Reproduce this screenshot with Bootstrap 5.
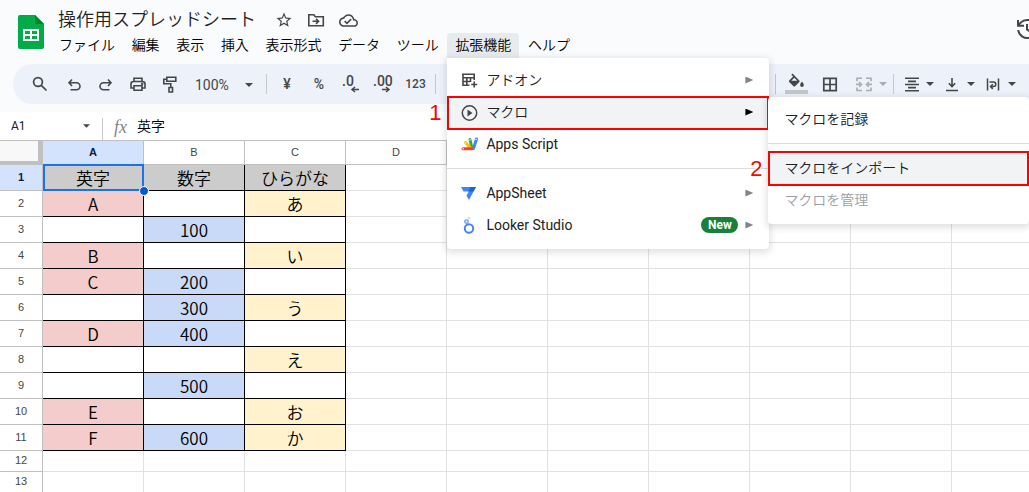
<!DOCTYPE html>
<html lang="ja">
<head>
<meta charset="utf-8">
<meta name="viewport" content="width=device-width, initial-scale=1">
<title>操作用スプレッドシート</title>
<link href="https://cdn.jsdelivr.net/npm/bootstrap@5.3.0/dist/css/bootstrap.min.css" rel="stylesheet">
<style>
  body { font-family: Roboto, "Noto Sans CJK JP", sans-serif; font-size: 14px; line-height: 20px; color: #202124; background: #fff; }
  button, input { font-family: inherit; color: inherit; }
  svg { display: block; flex: none; }
  .app-top { background: #f9fbfd; padding-bottom: 8px; }
  .title-bar { padding: 8px 0 6px 18px; height: 64px; }
  .sheet-logo { margin-top: 7px; }
  .title-row { margin-left: -2px; }
  .doc-title { font-size: 18px; line-height: 24px; font-weight: 350; color: #1f1f1f; width: 202px; padding: 0; }
  .plain-btn { border: 0; background: none; padding: 0; display: flex; align-items: center; justify-content: center; color: #444746; flex: none; }
  .title-icons { gap: 14px; margin-left: 15px; }
  .menu-list { width: 527px; margin-left: -9px; margin-top: 1px; }
  .menu-list .menu-btn { border: 0; background: none; padding: 0 8px; height: 25px; font-size: 14px; line-height: 25px; font-weight: 350; color: #000; border-radius: 4px 4px 0 0; white-space: nowrap; }
  .menu-list .menu-btn.opened { background: #e8ebee; }
  .history-btn { margin-right: -10px; margin-top: 9px; }

  .tool-bar { margin-left: 13px; height: 40px; padding: 0 9px; background: #edf1fa; border-radius: 20px 0 0 20px; color: #444746; font-weight: 500; }
  .tool-bar .plain-btn { width: 32px; height: 32px; font-weight: 500; font-size: 14px; }
  .tool-bar .first-tool { width: 36px; }
  .tool-bar .zoom-tool { width: 80px; padding: 2px 13px 0 9px; justify-content: space-between; font-weight: 400; }
  .tool-bar .num-tool { font-size: 12px; width: 33px; margin-right: 3px; }
  .tool-bar .fill-tool { width: 34px; }
  .tool-bar .pair { width: 36px; margin-left: 5px; justify-content: space-between; padding-right: 4px; padding-left: 2px; }
  .tool-bar .merge-pair { width: 38px; padding-left: 4px; padding-right: 2px; }
  .bar-line { width: 1px; height: 20px; background: #c7c7c7; flex: none; }
  .dim { opacity: .4; }

  .formula-bar { height: 29px; border-bottom: 1px solid #c0c0c0; }
  .name-box { width: 76px; border: 0; padding: 0 0 0 11px; font-size: 12px; background: none; outline: 0; }
  .name-arrow { margin-left: 7px; }
  .formula-line { height: 22px; width: 1px; background: #c7c7c7; margin-left: 12px; margin-top: 6px; }
  .formula-input { border: 0; outline: 0; font-size: 14px; font-weight: 350; color: #000; background: none; padding: 0; margin-top: -1px; }
  .fx-sign { font: italic 18px/20px "Liberation Serif", serif; color: #80868b; width: 23px; margin-left: 11px; margin-top: 1px; }

  .grid-area { overflow: hidden; flex: 1 1 0; min-height: 0; }
  .cells { table-layout: fixed; border-collapse: separate; border-spacing: 0; width: 0; }
  .cells .index-col { width: 43px; }
  .cells .data-col { width: 101px; }
  .cells th, .cells td { padding: 0; border: solid #e1e1e1; border-width: 0 1px 1px 0; text-align: center; vertical-align: middle; white-space: nowrap; }
  .cells th { font: 11px/14px "Liberation Sans", sans-serif; color: #444746; border-color: #c0c0c0; padding-bottom: 2px; }
  .cells thead th { height: 24px; }
  .cells tbody tr { height: 21px; }
  .cells tbody tr.tall { height: 26px; }
  .cells .sel-head { background: #d3e3fd; font-weight: 700; color: #041e49; }
  .cells .corner { background: #f8f8f8; border: solid #c0c0c0; border-width: 0 5px 4px 0; }
  .cells td.box { border-color: #000; font: 350 17px/22px "Noto Sans CJK JP", sans-serif; color: #000; }
  .tone-head { background: #ccc; }
  .tone-a { background: #f4cccc; }
  .tone-b { background: #c9daf8; }
  .tone-c { background: #fff2cc; }
  .picked { position: relative; }
  .picked::before { content: ""; position: absolute; inset: -1px -1px -1px 0; border: 2px solid #1a73e8; }
  .picked::after { content: ""; position: absolute; right: -6px; bottom: -6px; width: 10px; height: 10px; border-radius: 50%; background: #0b57d0; border: 1px solid #fff; z-index: 1; }

  .ext-wrap { position: relative; }
  .drop { position: absolute; background: #fff; box-shadow: 0 2px 6px 2px rgba(60,64,67,.15); z-index: 10; padding: 6px 0 8px; }
  .main-drop { left: 0; top: 100%; width: 322px; border-radius: 0 4px 4px 4px; }
  .sub-drop { left: 321px; top: 1px; width: 261px; border-radius: 4px; z-index: 11; }
  .drop-row { position: relative; }
  .drop-btn { display: flex; align-items: center; width: 100%; height: 32px; border: 0; background: none; padding: 0 16px 0 14px; font-size: 14px; font-weight: 350; text-align: left; color: #202124; }
  .drop-btn svg { margin-right: 8px; }
  .drop-btn .latin { font-weight: 400; }
  .sub-drop .drop-btn { padding-left: 16px; }
  .drop-btn:disabled { color: #9aa0a6; }
  .drop-line { height: 1px; background: #dadce0; margin: 8px 0; }
  .go { margin-left: auto; width: 8px; height: 7px; background: #80868b; clip-path: polygon(0 0, 100% 50%, 0 100%); }
  .lit > .drop-btn { background: #f1f3f4; }
  .lit > .drop-btn .go { background: #000; }
  .lit::after { content: ""; position: absolute; inset: 0 0 -2px 0; border: 2px solid #f00; pointer-events: none; }
  .sub-drop .lit::after { inset: -1px 0 -2px 0; }
  .new-tag { margin-left: auto; background: #188038; color: #fff; font-size: 12px; font-weight: 700; line-height: 16px; width: 37px; border-radius: 8px; text-align: center; }
  .new-tag + .go { margin-left: 7px; }
  .step { position: absolute; right: 100%; top: 5px; margin-right: 6px; font: 22px/24px "Liberation Sans", sans-serif; color: #f00; text-shadow: 0 0 2px #fff, 1px 0 #fff, -1px 0 #fff, 0 1px #fff; z-index: 12; }
</style>
</head>
<body class="vh-100 overflow-hidden d-flex flex-column">

<header class="app-top">
  <div class="title-bar d-flex">
    <svg class="sheet-logo" width="26" height="34" viewBox="0 0 26 34"><path fill="#00ac47" d="M2 0h15l9 9v23a2 2 0 0 1-2 2H2a2 2 0 0 1-2-2V2a2 2 0 0 1 2-2z"/><path fill="#00832d" d="M17 0l9 9h-9z"/><path fill="#fff" d="M5 14h16v12H5zM7 16v3h5v-3zM14 16v3h5v-3zM7 21v3h5v-3zM14 21v3h5v-3z" fill-rule="evenodd"/></svg>
    <div class="ms-3">
      <div class="title-row d-flex align-items-center">
        <h1 class="doc-title m-0 text-nowrap">操作用スプレッドシート</h1>
        <div class="d-flex title-icons">
          <button class="plain-btn" aria-label="スター"><svg width="18" height="18" viewBox="0 0 24 24" fill="currentColor"><path d="M22 9.24l-7.19-.62L12 2 9.19 8.63 2 9.24l5.46 4.73L5.82 21 12 17.27 18.18 21l-1.63-7.03L22 9.24zM12 15.4l-3.76 2.27 1-4.28-3.32-2.88 4.38-.38L12 6.1l1.71 4.04 4.38.38-3.32 2.88 1 4.28L12 15.4z"/></svg></button>
          <button class="plain-btn" aria-label="移動"><svg width="18" height="18" viewBox="0 0 18 18" fill="none" stroke="currentColor" stroke-width="1.6"><path d="M1.8 14.8V3.8h5l1.500 2h8v9zM5.500 10.300h6M9 7.700l2.600 2.600L9 12.900"/></svg></button>
          <button class="plain-btn" aria-label="保存状態"><svg width="19" height="19" viewBox="0 0 24 24" fill="currentColor"><path d="M19.350 10.040C18.670 6.590 15.640 4 12 4 9.110 4 6.600 5.640 5.350 8.040 2.340 8.360 0 10.910 0 14c0 3.310 2.690 6 6 6h13c2.760 0 5-2.240 5-5 0-2.640-2.050-4.780-4.650-4.960zM19 18H6c-2.210 0-4-1.790-4-4 0-2.050 1.530-3.760 3.560-3.970l1.070-.11.5-.95C8.080 7.140 9.940 6 12 6c2.620 0 4.880 1.860 5.390 4.430l.3 1.500 1.530.11c1.560.1 2.780 1.410 2.780 2.960 0 1.650-1.350 3-3 3zm-9-3.820l-2.090-2.090L6.500 13.500 10 17l6.010-6.010-1.410-1.410z"/></svg></button>
        </div>
      </div>
      <nav class="menu-list d-flex justify-content-between">
        <button class="menu-btn">ファイル</button>
        <button class="menu-btn">編集</button>
        <button class="menu-btn">表示</button>
        <button class="menu-btn">挿入</button>
        <button class="menu-btn">表示形式</button>
        <button class="menu-btn">データ</button>
        <button class="menu-btn">ツール</button>
        <div class="ext-wrap">
          <button class="menu-btn opened" aria-expanded="true">拡張機能</button>
          <div class="drop main-drop">
            <div class="drop-row"><button class="drop-btn"><svg width="17" height="16" viewBox="0 0 17 16" fill="none" stroke="#444746" stroke-width="1.600"><path d="M8.500 13.200H1.800M1 2.200H14M2 2.200V14M13.200 2.200V8M2 5.800H13M2 9.500H9M5.800 5.800V13M9.500 5.800V10M13.200 9.500v6M10.200 12.500h6"/></svg>アドオン<span class="go"></span></button></div>
            <div class="drop-row lit">
              <span class="step">1</span>
              <button class="drop-btn"><svg width="17" height="17" viewBox="0 0 17 17"><circle cx="8.500" cy="9" r="7.200" fill="none" stroke="#444746" stroke-width="1.500"/><path fill="#444746" d="M6.500 5.500v7l5-3.500z"/></svg>マクロ<span class="go"></span></button>
              <div class="drop sub-drop">
                <div class="drop-row"><button class="drop-btn">マクロを記録</button></div>
                <div class="drop-line"></div>
                <div class="drop-row lit"><span class="step">2</span><button class="drop-btn">マクロをインポート</button></div>
                <div class="drop-row"><button class="drop-btn" disabled>マクロを管理</button></div>
              </div>
            </div>
            <div class="drop-row"><button class="drop-btn"><svg width="17" height="16" viewBox="0 0 17 16" fill="none" stroke-linecap="round" stroke-width="3"><path stroke="#4285f4" d="M12.500 12.500l3-9.500"/><path stroke="#34a853" d="M11 12.500L9 3.500"/><path stroke="#fbbc04" d="M10 12.500L4.500 6.500"/><path stroke="#ea4335" d="M10.500 12.800H2"/><g fill="#fff" stroke="none"><circle cx="15.200" cy="3.400" r=".7"/><circle cx="9.100" cy="3.900" r=".7"/><circle cx="4.800" cy="6.900" r=".7"/><circle cx="2.200" cy="12.800" r=".7"/></g></svg><span class="latin">Apps Script</span></button></div>
            <div class="drop-line"></div>
            <div class="drop-row"><button class="drop-btn"><svg width="17" height="16" viewBox="0 0 17 16"><path fill="#4285f4" d="M0 2h15L8 15 5.500 10.500 7.800 6.500H2.500z"/><path fill="#1967d2" d="M9.500 2H15l-2.500 4.500H7.300z"/></svg><span class="latin">AppSheet</span><span class="go"></span></button></div>
            <div class="drop-row"><button class="drop-btn"><svg width="17" height="18" viewBox="0 0 17 18" fill="none"><circle cx="8" cy="12.500" r="4.200" stroke="#4285f4" stroke-width="2"/><circle cx="5.500" cy="5.600" r="1.700" stroke="#669df6" stroke-width="1.400"/><circle cx="8" cy="2.200" r=".9" stroke="#aecbfa" stroke-width=".8"/></svg><span class="latin">Looker Studio</span><span class="new-tag">New</span><span class="go"></span></button></div>
          </div>
        </div>
        <button class="menu-btn">ヘルプ</button>
      </nav>
    </div>
    <div class="ms-auto"><button class="plain-btn history-btn" aria-label="変更履歴"><svg width="24" height="24" viewBox="0 0 24 24" fill="none" stroke="#444746" stroke-width="2"><path d="M3.200 13a9 9 0 1 0 2.500-7.400L3 8.500M3 3v5.800h6M12 7v5.500l4 2.500"/></svg></button></div>
  </div>

  <div class="tool-bar d-flex align-items-center" role="toolbar">
    <button class="plain-btn first-tool" aria-label="検索"><svg width="16" height="16" viewBox="0 0 16 16" fill="none" stroke="currentColor" stroke-width="1.700"><circle cx="6" cy="6" r="4.400"/><path d="M9.300 9.300l5.200 5.200"/></svg></button>
    <button class="plain-btn" aria-label="元に戻す"><svg width="14" height="14" viewBox="0 0 14 14" fill="none" stroke="currentColor" stroke-width="1.600"><path d="M5 2.500L2 5.800l3 3.200M2 5.800h7.500a3.300 3.300 0 0 1 0 7H3.500"/></svg></button>
    <button class="plain-btn" aria-label="やり直し"><svg width="14" height="14" viewBox="0 0 14 14" fill="none" stroke="currentColor" stroke-width="1.600"><path d="M9 2.500l3 3.300-3 3.200M12 5.800H4.500a3.300 3.300 0 0 0 0 7h6"/></svg></button>
    <button class="plain-btn" aria-label="印刷"><svg width="16" height="16" viewBox="0 0 16 16" fill="none" stroke="currentColor" stroke-width="1.600"><path d="M4 5.500V2.200h8v3.300M4 12H1V8q0-2.500 2.500-2.500h9Q15 5.500 15 8v4h-3M4 9.800h8v4.500H4z"/><circle cx="12.200" cy="7.800" r=".5"/></svg></button>
    <button class="plain-btn" aria-label="書式のコピー"><svg width="16" height="18" viewBox="0 0 16 18" fill="none" stroke="currentColor" stroke-width="1.600"><path d="M4.800 2.300h9v4h-9zM4.800 4.300H1.800v4.500h7V12.500M7 12.500h3.500v4.500H7z"/></svg></button>
    <button class="plain-btn zoom-tool">100%<svg width="8" height="4" viewBox="0 0 8 4"><path d="M0 0h8L4 4z" fill="currentColor"/></svg></button>
    <span class="bar-line"></span>
    <button class="plain-btn ms-1">¥</button>
    <button class="plain-btn">%</button>
    <button class="plain-btn" aria-label="小数点以下の桁数を減らす"><svg width="20" height="26" viewBox="0 -4 20 26"><text x="1" y="11" font-size="14" font-weight="500" fill="currentColor">.0</text><path d="M11 14.500h7M14 12l-3 2.500 3 2.500" fill="none" stroke="currentColor" stroke-width="1.500"/></svg></button>
    <button class="plain-btn" aria-label="小数点以下の桁数を増やす"><svg width="22" height="26" viewBox="0 -4 22 26"><text x="1" y="11" font-size="14" font-weight="500" fill="currentColor">.00</text><path d="M10 14.500h7M14 12l3 2.500-3 2.500" fill="none" stroke="currentColor" stroke-width="1.500"/></svg></button>
    <button class="plain-btn num-tool">123</button>
    <span class="bar-line"></span>
    <div class="ms-auto d-flex align-items-center">
      <span class="bar-line"></span>
      <button class="plain-btn fill-tool ms-1" aria-label="塗りつぶしの色"><svg width="24" height="24" viewBox="0 0 24 24" fill="currentColor"><path d="M7.500 1.500L6.300 2.700l1.800 1.800L4.200 8.400q-.8.800 0 1.600l4.300 4.200q.8.800 1.600 0l4.200-4.200q.8-.8 0-1.600zM9.300 5.800l3 3H6.300z" fill-rule="evenodd"/><path d="M17 9.500q-2.200 2.600-1.800 3.700a1.800 1.800 0 0 0 3.600 0q0-1.400-1.800-3.700z"/><path fill="#c4c6c8" d="M0 18h23v4H0z"/></svg></button>
      <button class="plain-btn" aria-label="枠線"><svg width="16" height="16" viewBox="0 0 16 16" fill="none" stroke="currentColor" stroke-width="1.700"><path d="M1.800 2.300h12.400v12.400H1.800zM8 2.300v12.400M1.800 8.500h12.400"/></svg></button>
      <button class="plain-btn pair merge-pair dim" aria-label="セルを結合"><svg width="18" height="16" viewBox="0 0 18 16" fill="none" stroke="currentColor" stroke-width="1.600"><path d="M7 2.300H2v3M11 2.300h5v3M7 14.500H2v-3M11 14.500h5v-3M1 8.400h5M4.200 6L6.500 8.400l-2.300 2.300M17 8.400h-5M13.800 6L11.500 8.400l2.300 2.300"/></svg><svg width="8" height="4" viewBox="0 0 8 4"><path d="M0 0h8L4 4z" fill="currentColor"/></svg></button>
      <span class="bar-line ms-1"></span>
      <button class="plain-btn pair ms-2" aria-label="水平方向の配置"><svg width="16" height="16" viewBox="0 0 16 16" fill="none" stroke="currentColor" stroke-width="1.600"><path d="M1 2.300h14M4 5.400h8M1 8.500h14M4 11.600h8M1 14.700h14"/></svg><svg width="8" height="4" viewBox="0 0 8 4"><path d="M0 0h8L4 4z" fill="currentColor"/></svg></button>
      <button class="plain-btn pair" aria-label="垂直方向の配置"><svg width="14" height="16" viewBox="0 0 14 16" fill="none" stroke="currentColor" stroke-width="1.600"><path d="M1 14.500h12M7 2v8.500M3.800 7.300L7 10.600l3.200-3.300"/></svg><svg width="8" height="4" viewBox="0 0 8 4"><path d="M0 0h8L4 4z" fill="currentColor"/></svg></button>
      <button class="plain-btn pair" aria-label="テキストの折り返し"><svg width="14" height="16" viewBox="0 0 14 16" fill="none" stroke="currentColor" stroke-width="1.500"><path d="M1.500 2.500v12M12.500 2.500v12M3.500 6h4a2.300 2.300 0 0 1 0 4.600H4.500M6.800 8.300L4.500 10.600l2.300 2.300"/></svg><svg width="8" height="4" viewBox="0 0 8 4"><path d="M0 0h8L4 4z" fill="currentColor"/></svg></button>
    </div>
  </div>
</header>

<div class="formula-bar d-flex align-items-center">
  <input class="name-box" value="A1" aria-label="名前ボックス">
  <svg class="name-arrow" width="7" height="4" viewBox="0 0 8 4"><path d="M0 0h8L4 4z" fill="#444746"/></svg>
  <span class="formula-line"></span>
  <span class="fx-sign">fx</span>
  <input class="formula-input flex-grow-1" value="英字" aria-label="数式">
</div>

<main class="grid-area" id="grid">
  <table class="cells">
    <colgroup id="widths"><col class="index-col"></colgroup>
    <thead><tr id="letters"><th class="corner"></th></tr></thead>
    <tbody id="rows"></tbody>
  </table>
</main>

<script src="https://cdn.jsdelivr.net/npm/bootstrap@5.3.0/dist/js/bootstrap.bundle.min.js"></script>
<script>
  const data = [
    ['英字', '数字', 'ひらがな'], ['A', '', 'あ'], ['', '100', ''], ['B', '', 'い'],
    ['C', '200', ''], ['', '300', 'う'], ['D', '400', ''], ['', '', 'え'],
    ['', '500', ''], ['E', '', 'お'], ['F', '600', 'か']
  ];
  const tones = ['tone-a', 'tone-b', 'tone-c'];
  const grid = document.getElementById('grid');
  const widths = document.getElementById('widths');
  const letters = document.getElementById('letters');
  const rows = document.getElementById('rows');

  // Fill the visible area with whole columns and rows.
  const columns = Math.min(26, Math.max(3, Math.ceil((grid.clientWidth - 43) / 101)));
  const count = Math.max(data.length, data.length + Math.ceil((grid.clientHeight - 24 - data.length * 26) / 21));

  for (let c = 0; c < columns; c++) {
    const col = document.createElement('col');
    col.className = 'data-col';
    widths.append(col);
    const th = document.createElement('th');
    th.scope = 'col';
    th.textContent = String.fromCharCode(65 + c);
    if (c === 0) th.className = 'sel-head';
    letters.append(th);
  }
  for (let r = 0; r < count; r++) {
    const tr = document.createElement('tr');
    if (r < data.length) tr.className = 'tall';
    const th = document.createElement('th');
    th.scope = 'row';
    th.textContent = r + 1;
    if (r === 0) th.className = 'sel-head';
    tr.append(th);
    for (let c = 0; c < columns; c++) {
      const td = document.createElement('td');
      if (r < data.length && c < 3) {
        td.className = 'box';
        td.textContent = data[r][c];
        if (r === 0) td.classList.add('tone-head');
        else if (data[r][c]) td.classList.add(tones[c]);
        if (r === 0 && c === 0) td.classList.add('picked');
      }
      tr.append(td);
    }
    rows.append(tr);
  }
</script>
</body>
</html>
